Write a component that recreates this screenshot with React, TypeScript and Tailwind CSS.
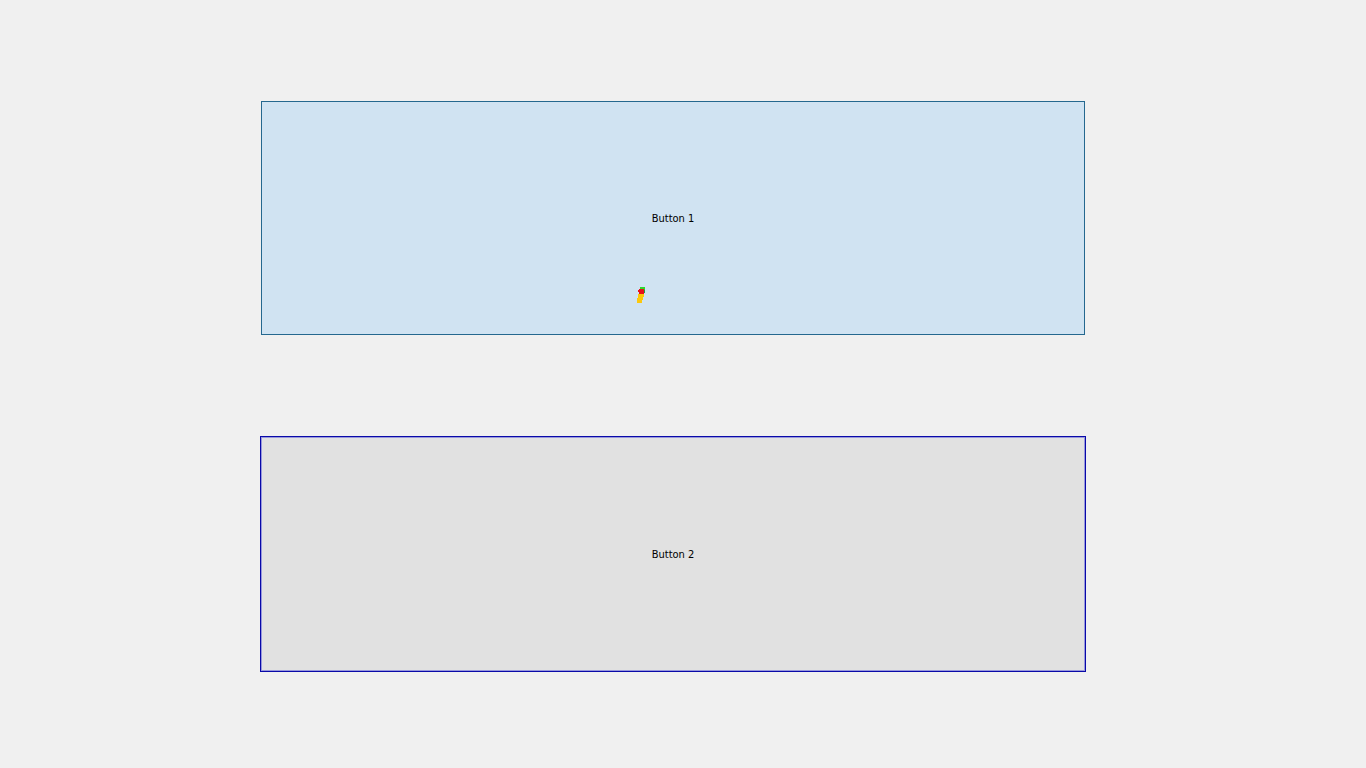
function PencilCursor() {
  return (
    <svg
      aria-hidden="true"
      className="pointer-events-none absolute left-[377px] top-[187px] h-4 w-[9px]"
      viewBox="0 0 9 16"
      shapeRendering="crispEdges"
    >
      <path d="M3 0h5v3H3z" fill="#2fd62f" />
      <path d="M2 2h5v5H2V5H1V3h1z" fill="#e8101c" />
      <path d="M7 3h1v3H7z" fill="#22a040" />
      <path d="M1 7h6v3H6v3H5v3H0v-5h1z" fill="#fcc80c" />
    </svg>
  );
}

export default function App() {
  return (
    <main className="grid min-h-screen grid-rows-2 gap-[100px] bg-[#f0f0f0] pt-[100px] pr-[280px] pb-24 pl-[260px] font-['DejaVu_Sans_Condensed','Noto_Sans',sans-serif] text-[11px] leading-[17px] text-black">
      <div className="relative flex p-px">
        <button type="button" className="flex-1 border border-[#25688f] bg-[#d0e3f2]">
          Button 1
        </button>
        <PencilCursor />
      </div>
      <button
        type="button"
        className="border border-[#0909a8] bg-[#e1e1e1] shadow-[inset_0_0_0_1px_#9898dc]"
      >
        Button 2
      </button>
    </main>
  );
}
